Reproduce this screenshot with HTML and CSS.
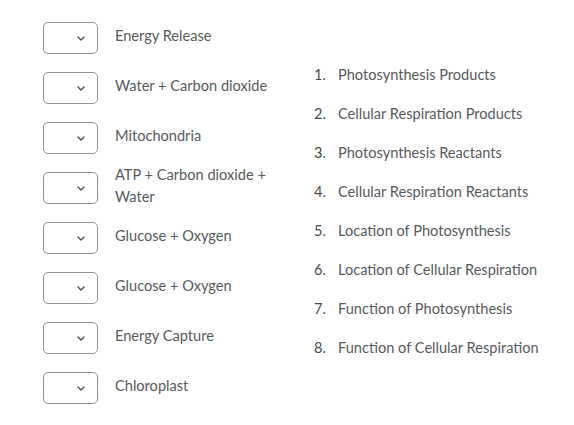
FILE: index.html
```html
<!DOCTYPE html>
<html>
<head>
<meta charset="utf-8">
<link rel="stylesheet" href="styles.css">
</head>
<body>
<div class="page">
  <div class="left">
    <div class="row"><div class="select"><svg class="chev" width="8" height="5" viewBox="0 0 8 5"><path d="M1 1 L4 4 L7 1" fill="none" stroke="#494c4e" stroke-width="1.4" stroke-linecap="round" stroke-linejoin="round"/></svg></div><div class="label">Energy Release</div></div>
    <div class="row"><div class="select"><svg class="chev" width="8" height="5" viewBox="0 0 8 5"><path d="M1 1 L4 4 L7 1" fill="none" stroke="#494c4e" stroke-width="1.4" stroke-linecap="round" stroke-linejoin="round"/></svg></div><div class="label">Water + Carbon dioxide</div></div>
    <div class="row"><div class="select"><svg class="chev" width="8" height="5" viewBox="0 0 8 5"><path d="M1 1 L4 4 L7 1" fill="none" stroke="#494c4e" stroke-width="1.4" stroke-linecap="round" stroke-linejoin="round"/></svg></div><div class="label">Mitochondria</div></div>
    <div class="row"><div class="select"><svg class="chev" width="8" height="5" viewBox="0 0 8 5"><path d="M1 1 L4 4 L7 1" fill="none" stroke="#494c4e" stroke-width="1.4" stroke-linecap="round" stroke-linejoin="round"/></svg></div><div class="label">ATP + Carbon dioxide + Water</div></div>
    <div class="row"><div class="select"><svg class="chev" width="8" height="5" viewBox="0 0 8 5"><path d="M1 1 L4 4 L7 1" fill="none" stroke="#494c4e" stroke-width="1.4" stroke-linecap="round" stroke-linejoin="round"/></svg></div><div class="label">Glucose + Oxygen</div></div>
    <div class="row"><div class="select"><svg class="chev" width="8" height="5" viewBox="0 0 8 5"><path d="M1 1 L4 4 L7 1" fill="none" stroke="#494c4e" stroke-width="1.4" stroke-linecap="round" stroke-linejoin="round"/></svg></div><div class="label">Glucose + Oxygen</div></div>
    <div class="row"><div class="select"><svg class="chev" width="8" height="5" viewBox="0 0 8 5"><path d="M1 1 L4 4 L7 1" fill="none" stroke="#494c4e" stroke-width="1.4" stroke-linecap="round" stroke-linejoin="round"/></svg></div><div class="label">Energy Capture</div></div>
    <div class="row"><div class="select"><svg class="chev" width="8" height="5" viewBox="0 0 8 5"><path d="M1 1 L4 4 L7 1" fill="none" stroke="#494c4e" stroke-width="1.4" stroke-linecap="round" stroke-linejoin="round"/></svg></div><div class="label">Chloroplast</div></div>
  </div>
  <ol class="choices">
    <li><span class="num">1.</span><span>Photosynthesis Products</span></li>
    <li><span class="num">2.</span><span>Cellular Respiration Products</span></li>
    <li><span class="num">3.</span><span>Photosynthesis Reactants</span></li>
    <li><span class="num">4.</span><span>Cellular Respiration Reactants</span></li>
    <li><span class="num">5.</span><span>Location of Photosynthesis</span></li>
    <li><span class="num">6.</span><span>Location of Cellular Respiration</span></li>
    <li><span class="num">7.</span><span>Function of Photosynthesis</span></li>
    <li><span class="num">8.</span><span>Function of Cellular Respiration</span></li>
  </ol>
</div>
</body>
</html>
```

FILE: styles.css
```css
html, body {
  margin: 0;
  padding: 0;
  background: #ffffff;
}
body {
  font-family: Lato, "Open Sans", sans-serif;
  font-size: 14.6px;
  color: #565a5c;
}
.page {
  display: flex;
  padding: 22px 0 0 43px;
}
.left {
  width: 271px;
  display: flex;
  flex-direction: column;
  gap: 18px;
}
.row {
  display: flex;
  align-items: center;
  gap: 17px;
  height: 32px;
}
.select {
  box-sizing: border-box;
  width: 55px;
  height: 32px;
  flex: none;
  border: 1px solid #8d8f91;
  border-radius: 5px;
  display: flex;
  align-items: center;
  padding-left: 33px;
}
.chev {
  display: block;
}
.label {
  width: 160px;
  line-height: 22px;
  padding-bottom: 4px;
}
.choices {
  list-style: none;
  margin: 42px 0 0 0;
  padding: 0;
  display: flex;
  flex-direction: column;
  gap: 18px;
}
.choices li {
  display: flex;
  line-height: 21px;
}
.num {
  width: 24px;
  flex: none;
  color: #494c4e;
}
```
